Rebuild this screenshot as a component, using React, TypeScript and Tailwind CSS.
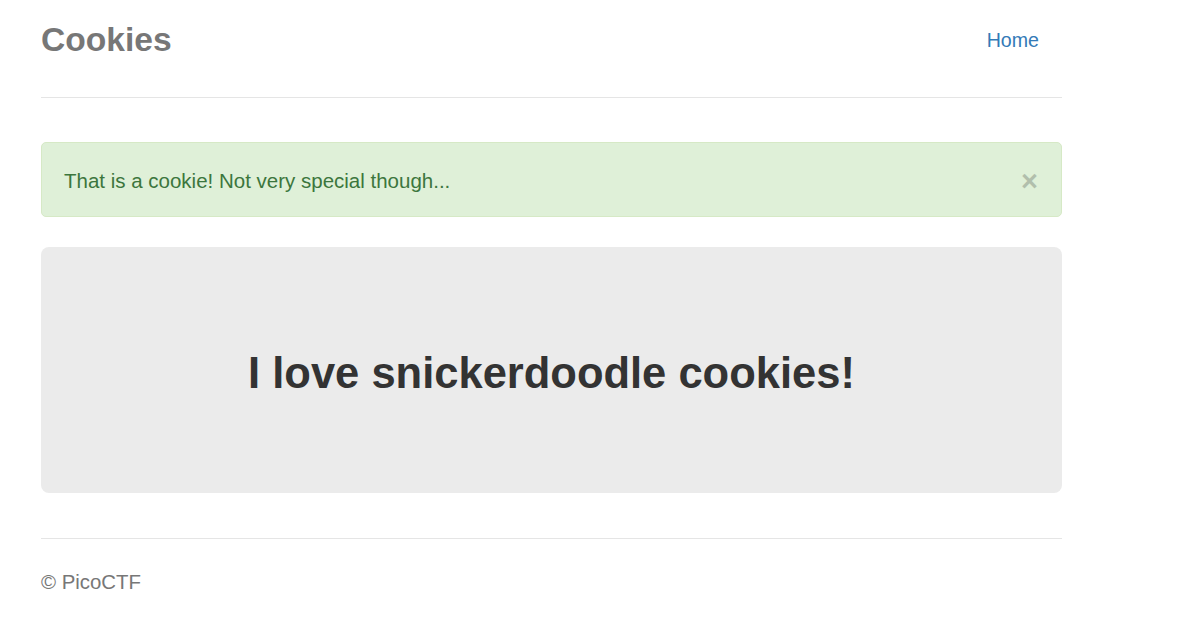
export default function App() {
  return (
    <div className="min-h-[618px] bg-white" style={{ fontFamily: '"Liberation Sans", Arial, Helvetica, sans-serif' }}>
      <div className="ml-[41px] w-[1021px]">
        <div className="flex items-center justify-between pt-[12px] pb-[29px] border-b border-[#e5e5e5]">
          <h3 className="text-[33.6px] leading-[56px] font-bold text-[#777777]">Cookies</h3>
          <nav className="pr-[23px]">
            <a className="text-[19.6px] leading-[28px] text-[#337ab7]">Home</a>
          </nav>
        </div>
        <div className="mt-[44px] flex items-center justify-between h-[75px] rounded-[5px] border border-[#d6e9c6] bg-[#dff0d8] pl-[22px] pr-[23px]">
          <span className="text-[20.5px] leading-[28px] text-[#3c763d] pt-[2px]">That is a cookie! Not very special though...</span>
          <span className="text-[29px] font-bold leading-none text-black opacity-20 pt-[4px]">×</span>
        </div>
        <div className="mt-[30px] h-[246px] rounded-[8px] bg-[#ebebeb] flex items-center justify-center pt-[7px]">
          <h1 className="text-[43.5px] font-bold text-[#333333] leading-none">I love snickerdoodle cookies!</h1>
        </div>
        <footer className="mt-[45px] border-t border-[#e5e5e5] pt-[29px]">
          <p className="text-[20.4px] leading-[28px] text-[#777777]">© PicoCTF</p>
        </footer>
      </div>
    </div>
  );
}
